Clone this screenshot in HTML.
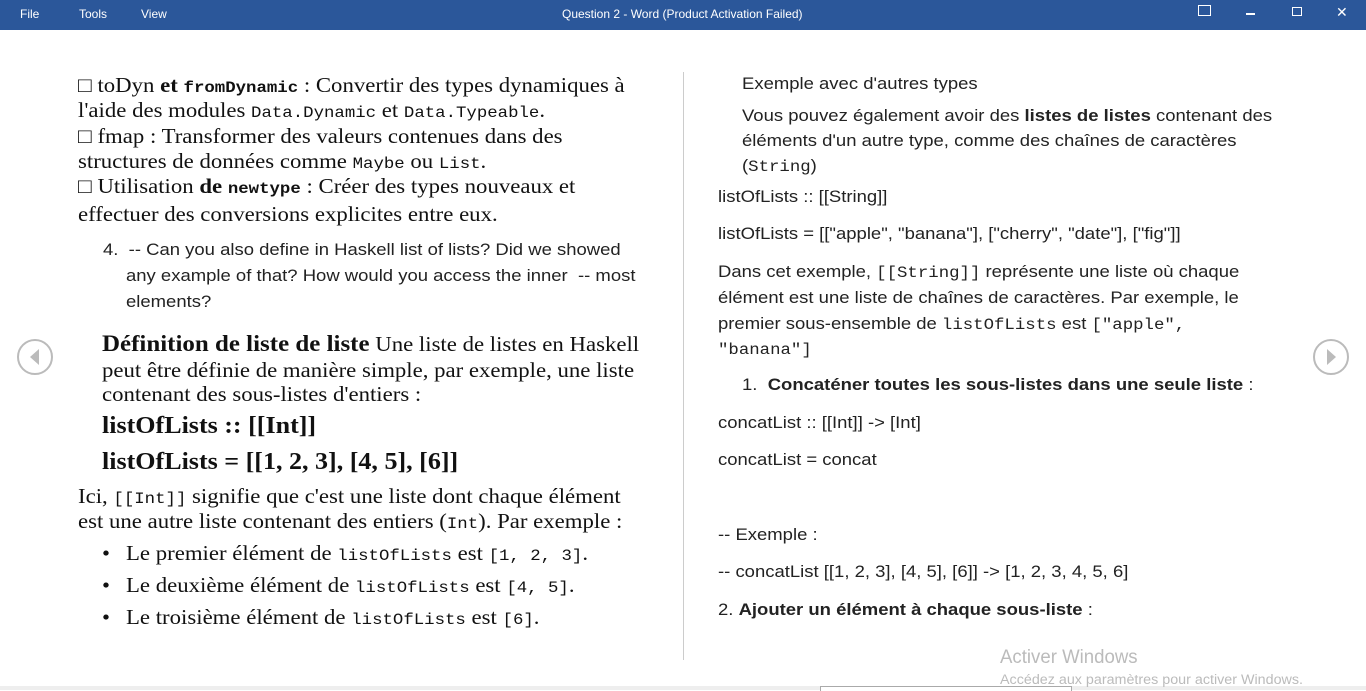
<!DOCTYPE html>
<html><head><meta charset="utf-8"><style>
body{margin:0;width:1366px;height:690px;overflow:hidden;background:#fff;position:relative;font-family:"Liberation Serif",serif;}
.t{position:absolute;white-space:nowrap;transform-origin:0 0;}
.s{font-family:"Liberation Serif",serif;font-size:21px;color:#111;transform:scaleX(1.085);}
.r{font-family:"Liberation Sans",sans-serif;font-size:16.5px;color:#222;transform:scaleX(1.12);}
.m{font-family:"Liberation Mono",monospace;font-size:16px;}
.r .m{font-size:15.5px}
.bar{position:absolute;left:0;top:0;width:1366px;height:30px;background:#2b579a;color:#fff;font-family:"Liberation Sans",sans-serif;font-size:12px;}
.bar span{position:absolute;top:7px;}
</style></head><body>
<div class="bar">
<span style="left:20px">File</span><span style="left:79px">Tools</span><span style="left:141px">View</span>
<span style="left:562px">Question 2 - Word (Product Activation Failed)</span>
<span style="left:1198px;top:5px;width:11px;height:9px;border:1px solid #fff;"></span>
<span style="left:1246px;top:13px;width:9px;height:2px;background:#fff"></span>
<span style="left:1292px;top:7px;width:8px;height:7px;border:1px solid #fff;"></span>
<span style="left:1336px;top:4px;font-size:14px">✕</span>
</div>
<div style="position:absolute;left:683px;top:72px;width:1px;height:588px;background:#ccc"></div>
<svg style="position:absolute;left:16px;top:338px" width="38" height="38"><circle cx="19" cy="19" r="17" fill="none" stroke="#bbb" stroke-width="2"/><path d="M23 11 L14 19 L23 27Z" fill="#bbb"/></svg>
<svg style="position:absolute;left:1312px;top:338px" width="38" height="38"><circle cx="19" cy="19" r="17" fill="none" stroke="#bbb" stroke-width="2"/><path d="M15 11 L24 19 L15 27Z" fill="#bbb"/></svg>

<div class="t s" style="left:78px;top:73px">□ toDyn <b>et <span class="m" style="font-weight:bold">fromDynamic</span></b> : Convertir des types dynamiques à</div>
<div class="t s" style="left:78px;top:98px">l'aide des modules <span class="m">Data.Dynamic</span> et <span class="m">Data.Typeable</span>.</div>
<div class="t s" style="left:78px;top:124px">□ fmap : Transformer des valeurs contenues dans des</div>
<div class="t s" style="left:78px;top:149px">structures de données comme <span class="m">Maybe</span> ou <span class="m">List</span>.</div>
<div class="t s" style="left:78px;top:174px">□ Utilisation <b>de <span class="m" style="font-weight:bold">newtype</span></b> : Créer des types nouveaux et</div>
<div class="t s" style="left:78px;top:202px">effectuer des conversions explicites entre eux.</div>
<div class="t r" style="left:103px;top:241px">4.&nbsp;&nbsp;-- Can you also define in Haskell list of lists? Did we showed</div>
<div class="t r" style="left:126px;top:267px">any example of that? How would you access the inner &nbsp;-- most</div>
<div class="t r" style="left:126px;top:293px">elements?</div>
<div class="t s" style="left:102px;top:331px"><b style="font-size:23px">Définition de liste de liste</b> Une liste de listes en Haskell</div>
<div class="t s" style="left:102px;top:358px">peut être définie de manière simple, par exemple, une liste</div>
<div class="t s" style="left:102px;top:382px">contenant des sous-listes d'entiers :</div>
<div class="t s" style="left:102px;top:413px;font-size:24px"><b>listOfLists :: [[Int]]</b></div>
<div class="t s" style="left:102px;top:449px;font-size:24px"><b>listOfLists = [[1, 2, 3], [4, 5], [6]]</b></div>
<div class="t s" style="left:78px;top:484px">Ici, <span class="m">[[Int]]</span> signifie que c'est une liste dont chaque élément</div>
<div class="t s" style="left:78px;top:509px">est une autre liste contenant des entiers (<span class="m">Int</span>). Par exemple :</div>
<div class="t s" style="left:102px;top:541px">•</div><div class="t s" style="left:126px;top:541px">Le premier élément de <span class="m">listOfLists</span> est <span class="m">[1, 2, 3]</span>.</div>
<div class="t s" style="left:102px;top:573px">•</div><div class="t s" style="left:126px;top:573px">Le deuxième élément de <span class="m">listOfLists</span> est <span class="m">[4, 5]</span>.</div>
<div class="t s" style="left:102px;top:605px">•</div><div class="t s" style="left:126px;top:605px">Le troisième élément de <span class="m">listOfLists</span> est <span class="m">[6]</span>.</div>

<div class="t r" style="left:742px;top:75px">Exemple avec d'autres types</div>
<div class="t r" style="left:742px;top:107px">Vous pouvez également avoir des <b>listes de listes</b> contenant des</div>
<div class="t r" style="left:742px;top:132px">éléments d'un autre type, comme des chaînes de caractères</div>
<div class="t r" style="left:742px;top:157px">(<span class="m">String</span>)</div>
<div class="t r" style="left:718px;top:188px">listOfLists :: [[String]]</div>
<div class="t r" style="left:718px;top:225px">listOfLists = [["apple", "banana"], ["cherry", "date"], ["fig"]]</div>
<div class="t r" style="left:718px;top:263px">Dans cet exemple, <span class="m">[[String]]</span> représente une liste où chaque</div>
<div class="t r" style="left:718px;top:289px">élément est une liste de chaînes de caractères. Par exemple, le</div>
<div class="t r" style="left:718px;top:315px">premier sous-ensemble de <span class="m">listOfLists</span> est <span class="m">["apple",</span></div>
<div class="t r" style="left:718px;top:340px"><span class="m">"banana"]</span></div>
<div class="t r" style="left:742px;top:376px">1.&nbsp;&nbsp;<b>Concaténer toutes les sous-listes dans une seule liste</b> :</div>
<div class="t r" style="left:718px;top:414px">concatList :: [[Int]] -&gt; [Int]</div>
<div class="t r" style="left:718px;top:451px">concatList = concat</div>
<div class="t r" style="left:718px;top:526px">-- Exemple :</div>
<div class="t r" style="left:718px;top:563px">-- concatList [[1, 2, 3], [4, 5], [6]] -&gt; [1, 2, 3, 4, 5, 6]</div>
<div class="t r" style="left:718px;top:601px">2. <b>Ajouter un élément à chaque sous-liste</b> :</div>

<div style="position:absolute;left:0;top:686px;width:1366px;height:4px;background:#eee"></div>
<div style="position:absolute;left:820px;top:686px;width:250px;height:4px;border:1px solid #aaa;border-bottom:none;background:#fff"></div>
<div class="t" style="left:1000px;top:647px;font-family:'Liberation Sans',sans-serif;font-size:19px;color:#bbb;transform:scaleX(0.98)">Activer Windows</div>
<div class="t" style="left:1000px;top:672px;font-family:'Liberation Sans',sans-serif;font-size:13.5px;color:#bbb;transform:scaleX(1.06)">Accédez aux paramètres pour activer Windows.</div>
</body></html>
